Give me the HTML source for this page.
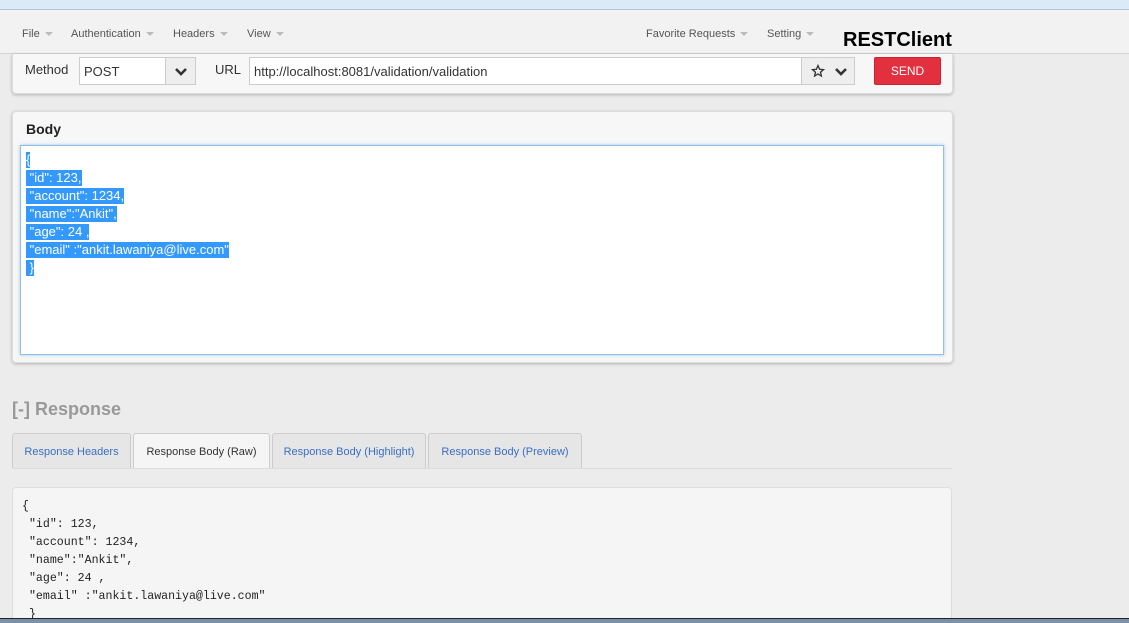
<!DOCTYPE html>
<html><head><style>
*{box-sizing:border-box;margin:0;padding:0}
html,body{width:1129px;height:623px;overflow:hidden}
body{background:#ececec;font-family:"Liberation Sans",Arial,sans-serif;position:relative}
.top{position:absolute;left:0;top:0;width:1129px;height:10px;background:#dce9f7;border-bottom:1px solid #b7c5d6}
.nav{position:absolute;left:0;top:10px;width:1129px;height:44px;background:#f2f2f2;border-bottom:1px solid #d4d4d4}
.nav span{position:absolute;top:18px;font-size:11px;color:#555}
.caret{display:inline-block;width:0;height:0;border-left:4px solid transparent;border-right:4px solid transparent;border-top:4px solid #bbb;margin-left:5px;vertical-align:middle}
.brand{position:absolute;left:843px;top:19px;font-size:20px;font-weight:bold;color:#000}
.p1{position:absolute;left:12px;top:54px;width:941px;height:40px;background:#f7f7f7;border:1px solid #ddd;border-top:none;border-radius:0 0 4px 4px;box-shadow:0 1px 3px rgba(0,0,0,.25)}
.lbl{position:absolute;font-size:13px;color:#333}
.inp{position:absolute;background:#fff;border:1px solid #ccc;font-size:13px;color:#333;padding:6px 4px}
.send{position:absolute;left:874px;top:57px;width:67px;height:28px;background:#e2303f;border:1px solid #c92433;border-radius:2px;color:#fff;font-size:12px;text-align:center;line-height:27px}
.p2{position:absolute;left:12px;top:111px;width:941px;height:252px;background:#f7f7f7;border:1px solid #ddd;border-radius:4px;box-shadow:0 1px 3px rgba(0,0,0,.25)}
.ta{position:absolute;left:20px;top:145px;width:924px;height:210px;background:#fff;border:1px solid #8ec1ea;box-shadow:0 0 3px rgba(80,150,220,.5)}
.ta div{position:absolute;left:5px;font-size:13px;color:#fff;background:#3399ff;height:16px;line-height:16px;white-space:pre}
.resp{position:absolute;left:12px;top:399px;font-size:18px;font-weight:bold;color:#999}
.tab{position:absolute;top:433px;height:35px;border:1px solid #ccc;border-bottom:none;background:#e6e6e6;border-radius:3px 3px 0 0;font-size:11px;color:#3a6fc4;text-align:center;line-height:36px}
.tabline{position:absolute;left:12px;top:468px;width:940px;height:1px;background:#ddd}
.rb{position:absolute;left:12px;top:487px;width:940px;height:131px;background:#f5f5f5;border:1px solid #ddd;border-bottom:none;border-radius:4px 4px 0 0;overflow:hidden}
.rb pre{position:absolute;left:9px;top:10px;font-family:"Liberation Mono",monospace;font-size:11.6px;line-height:18px;color:#222}
.bot{position:absolute;left:0;top:618px;width:1129px;height:5px;background:#7d90a8;border-top:1px solid #222}
</style></head><body>
<div class="top"></div>
<div class="nav">
<span style="left:22px">File<i class="caret"></i></span>
<span style="left:71px">Authentication<i class="caret"></i></span>
<span style="left:173px">Headers<i class="caret"></i></span>
<span style="left:247px">View<i class="caret"></i></span>
<span style="left:646px">Favorite Requests<i class="caret"></i></span>
<span style="left:767px">Setting<i class="caret"></i></span>
<div class="brand">RESTClient</div>
</div>
<div class="p1"></div>
<div class="lbl" style="left:25px;top:62px">Method</div>
<div class="inp" style="left:79px;top:57px;width:117px;height:28px;padding-left:4px">POST</div>
<div style="position:absolute;left:165px;top:58px;width:30px;height:26px;background:#eee;border-left:1px solid #ccc">
<svg width="30" height="26"><path d="M10 11 L15 16 L20 11" fill="none" stroke="#333" stroke-width="2.6"/></svg></div>
<div class="lbl" style="left:215px;top:62px">URL</div>
<div class="inp" style="left:249px;top:57px;width:606px;height:28px">http://localhost:8081/validation/validation</div>
<div style="position:absolute;left:801px;top:58px;width:53px;height:26px;background:#eee;border-left:1px solid #ccc">
<svg width="53" height="26"><path d="M16 7.5 L17.6 11.3 L21.5 11.6 L18.5 14.2 L19.4 18 L16 16 L12.6 18 L13.5 14.2 L10.5 11.6 L14.4 11.3 Z" fill="none" stroke="#333" stroke-width="1.3"/><path d="M34 11 L39 16 L44 11" fill="none" stroke="#333" stroke-width="2.6"/></svg></div>
<div class="send">SEND</div>
<div class="p2"><div style="position:absolute;left:13px;top:9px;font-size:14px;font-weight:bold;color:#222">Body</div></div>
<div class="ta">
<div style="top:6px">{</div>
<div style="top:24px"> "id": 123,</div>
<div style="top:42px"> "account": 1234,</div>
<div style="top:60px"> "name":"Ankit",</div>
<div style="top:78px"> "age": 24 ,</div>
<div style="top:96px"> "email" :"ankit.lawaniya@live.com"</div>
<div style="top:114px"> }</div>
</div>
<div class="resp">[-] Response</div>
<div class="tab" style="left:12px;width:119px">Response Headers</div>
<div class="tab" style="left:133px;width:137px;background:#f5f5f5;color:#333;height:36px">Response Body (Raw)</div>
<div class="tab" style="left:272px;width:154px">Response Body (Highlight)</div>
<div class="tab" style="left:428px;width:154px">Response Body (Preview)</div>
<div class="tabline"></div>
<div class="rb"><pre>{
 "id": 123,
 "account": 1234,
 "name":"Ankit",
 "age": 24 ,
 "email" :"ankit.lawaniya@live.com"
 }</pre></div>
<div class="bot"></div>
</body></html>
